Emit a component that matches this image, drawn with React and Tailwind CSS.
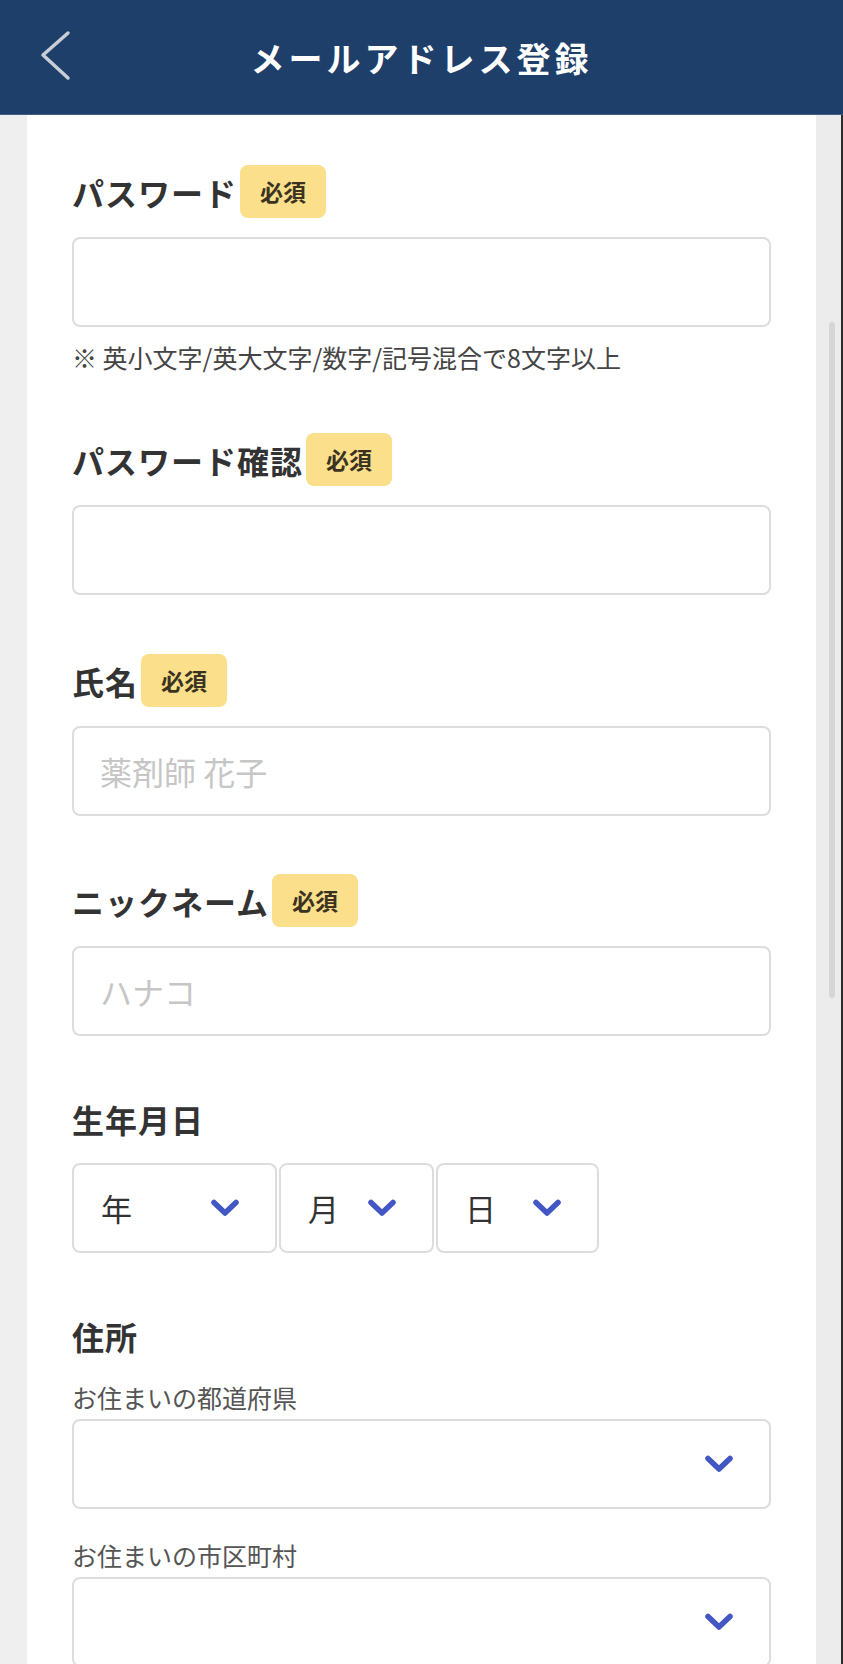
import React from "react";

const FONT = { fontFamily: '"Noto Sans CJK JP", "Noto Sans", sans-serif' };

// bold blue chevron used by the selects
const Chevron = () => (
  <svg width="30" height="20" viewBox="0 0 30 20" className="shrink-0">
    <path d="M4 4.5 L15 15 L26 4.5" fill="none" stroke="#4256c4" strokeWidth="5.5" strokeLinecap="round" strokeLinejoin="round" />
  </svg>
);

const Badge = () => (
  <span className="ml-[3px] inline-flex h-[53px] items-center rounded-[8px] bg-[#fcdf8b] px-[20px] text-[23px] font-bold text-[#3b3322]">
    必須
  </span>
);

const FieldLabel = ({ children, required }) => (
  <div className="flex h-[53px] items-center">
    <span className="text-[32px] font-bold tracking-[1px] text-[#333333]">{children}</span>
    {required && <Badge />}
  </div>
);

const TextBox = ({ placeholder }) => (
  <div className="mt-[19px] flex h-[90px] items-center rounded-[8px] border-2 border-[#dddddd] bg-white pl-[26px]">
    {placeholder && <span className="text-[32px] text-[#c6c6c6]">{placeholder}</span>}
  </div>
);

const SelectBox = ({ label, className }) => (
  <div
    className={`flex h-[90px] items-center justify-between rounded-[8px] border-2 border-[#dddddd] bg-white pl-[27px] pr-[35px] ${className || ""}`}
  >
    <span className="text-[31px] text-[#333333]">{label}</span>
    <Chevron />
  </div>
);

export default function App() {
  return (
    <div style={FONT} className="flex h-[1664px] w-[843px] flex-col overflow-hidden bg-[#efefef]">
      {/* header */}
      <header className="relative flex h-[115px] shrink-0 items-center justify-center border-b border-[#3f5f85] bg-[#1f3f6b]">
        <svg width="34" height="52" viewBox="0 0 34 52" className="absolute left-[38px] top-[30px]">
          <path d="M30 3 L5 25 L30 48" fill="none" stroke="#c9cdd5" strokeWidth="3.5" strokeLinecap="round" strokeLinejoin="round" />
        </svg>
        <h1 className="text-[34px] font-bold tracking-[4px] text-white">メールアドレス登録</h1>
      </header>

      <div className="flex flex-1">
        <div className="w-[27px] shrink-0 bg-[#efefef]" />

        {/* form card */}
        <main className="flex flex-1 flex-col bg-white px-[45px] pt-[50px]">
          <FieldLabel required>パスワード</FieldLabel>
          <TextBox />
          <p className="mt-[14px] text-[25px] leading-[32px] text-[#444444]">※ 英小文字/英大文字/数字/記号混合で8文字以上</p>

          <div className="mt-[60px]">
            <FieldLabel required>パスワード確認</FieldLabel>
            <TextBox />
          </div>

          <div className="mt-[59px]">
            <FieldLabel required>氏名</FieldLabel>
            <TextBox placeholder="薬剤師 花子" />
          </div>

          <div className="mt-[58px]">
            <FieldLabel required>ニックネーム</FieldLabel>
            <TextBox placeholder="ハナコ" />
          </div>

          <div className="mt-[56px]">
            <FieldLabel>生年月日</FieldLabel>
            <div className="mt-[18px] flex gap-[2px]">
              <SelectBox label="年" className="w-[205px]" />
              <SelectBox label="月" className="w-[155px]" />
              <SelectBox label="日" className="w-[163px]" />
            </div>
          </div>

          <div className="mt-[56px]">
            <FieldLabel>住所</FieldLabel>
            <p className="mt-[20px] text-[25px] leading-[30px] text-[#555555]">お住まいの都道府県</p>
            <SelectBox className="mt-[7px]" />
            <p className="mt-[31px] text-[25px] leading-[30px] text-[#555555]">お住まいの市区町村</p>
            <SelectBox className="mt-[7px]" />
          </div>
        </main>

        {/* right gutter with scrollbar */}
        <div className="relative w-[25px] shrink-0 bg-[#ececec]">
          <div className="absolute left-[13px] top-[207px] h-[676px] w-[6px] rounded-full bg-[#d6d6d6]" />
        </div>
        <div className="w-[2px] shrink-0 bg-[#2c2c2c]" />
      </div>
    </div>
  );
}
